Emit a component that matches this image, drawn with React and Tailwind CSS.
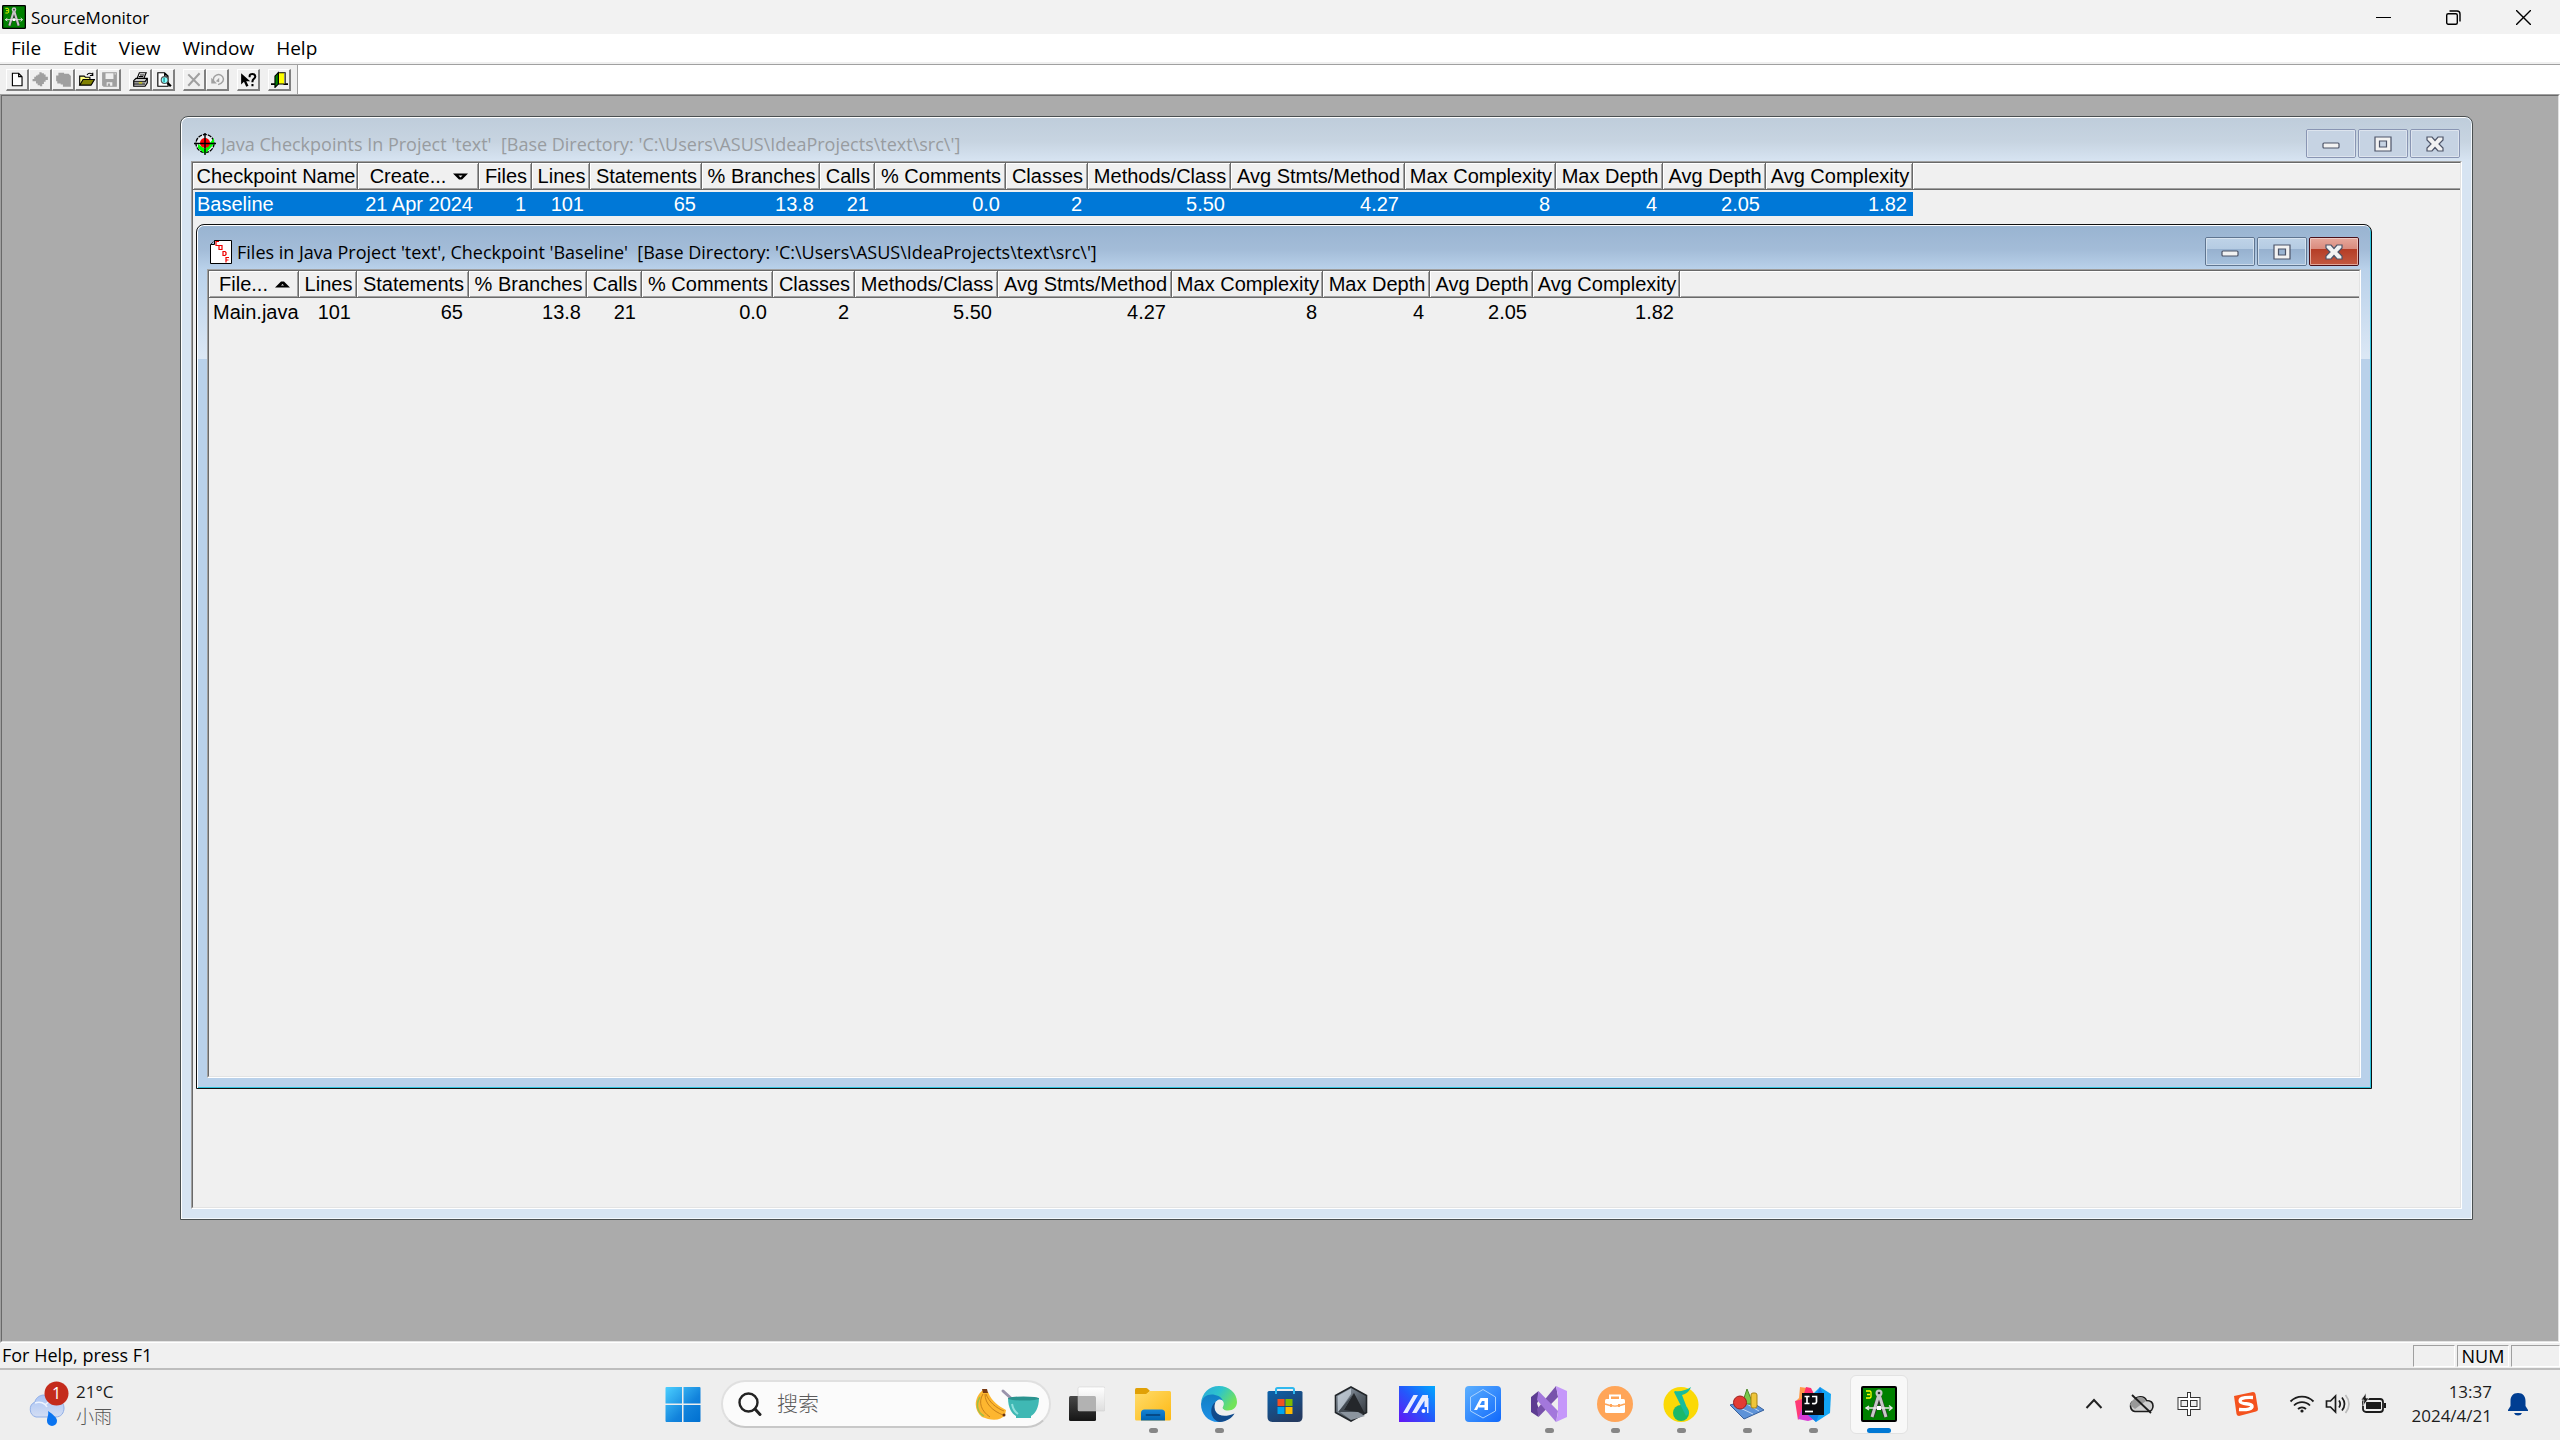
import React from "react";

const checkpointColumns = [
  ["Checkpoint Name", 165], ["Create...", 121], ["Files", 53], ["Lines", 58], ["Statements", 112],
  ["% Branches", 118], ["Calls", 55], ["% Comments", 131], ["Classes", 82], ["Methods/Class", 143],
  ["Avg Stmts/Method", 174], ["Max Complexity", 151], ["Max Depth", 107], ["Avg Depth", 103], ["Avg Complexity", 147],
];
const checkpointRow = ["Baseline", "21 Apr 2024", "1", "101", "65", "13.8", "21", "0.0", "2", "5.50", "4.27", "8", "4", "2.05", "1.82"];
const fileColumns = [["File...", 90], ...checkpointColumns.slice(3)];
const fileRow = ["Main.java", ...checkpointRow.slice(3)];

/* ---------- application icon ---------- */

function CompassIcon({ className }) {
  return (
    <svg viewBox="0 0 36 36" className={className} aria-hidden="true">
      <rect width="36" height="36" rx="2" fill="#000" />
      <rect x="2" y="2" width="32" height="32" fill="#008000" />
      <path d="M5 5h4l1 1v5l-1 1H5M6 8.500h3" stroke="#ff0" strokeWidth="1.300" fill="none" />
      <path d="M18 10 11 31M18 10l7 21" stroke="#333" strokeWidth="4.500" />
      <path d="M17.500 10 11 31M18.500 10 25 31" stroke="#c8c8c8" strokeWidth="3" />
      <path d="M5 22h25M8 20l-3 2 3 2M28 19.500l3 2.500-3 2.500" stroke="#e6e6e6" strokeWidth="1.400" fill="none" />
      <circle cx="18" cy="7" r="3.500" fill="#c8c8c8" />
      <circle cx="18" cy="7" r="1.300" fill="#333" />
      <path d="M16 20h4v4h-4z" fill="#fff" />
    </svg>
  );
}

/* ---------- toolbar ---------- */

const toolGlyphs = {
  "New project": (
    <path d="M3 2h5.500l3 3v8H3zM8.500 2v3h3" fill="#fff" stroke="#000" />
  ),
  "New checkpoint": (
    <path d="M5 3h1.500V1h2v1h2v1h1.500v2h2v3h-2v1.500h-1.500v2H9v2H7v-1H5v-1.500H3.500v-2H2V9H.500V7H2V5h1.500V4H5z" fill="#a0a0a0" />
  ),
  "Copy checkpoint": (
    <path d="M3 1.500h5v1h4l2 2V14H7v-2H5v-1H2V9H1V4h2z" fill="#a0a0a0" />
  ),
  "Open project": (
    <>
      <path d="M1.500 12.500v-8h4l1 1h4v2" fill="#ffff80" stroke="#000" />
      <path d="M1.500 12.500l3-5h10l-3 5z" fill="#808000" stroke="#000" />
      <path d="M8 3.500c1-2 4-2 5 0m0-2v2.500h-2.500" fill="none" stroke="#000" />
    </>
  ),
  "Save project": (
    <>
      <path d="M1.500 1.500h12v12h-11l-1-1z" fill="#a0a0a0" stroke="#a0a0a0" />
      <path d="M4 2h7v5H4zM5 10h5v3H8v-2H6v2H5zM12 2h1v1h-1z" fill="#f0f0f0" />
    </>
  ),
  Print: (
    <>
      <path d="M4.500 6.500l2-5h6l-2 5" fill="#fff" stroke="#000" />
      <path d="M7 3.500h4M6 5h4" stroke="#000" />
      <path d="M1.500 8.500l2-2h10v4l-2 3h-10z" fill="#c8c8c8" stroke="#000" />
      <path d="M1.500 9.500h10l2-3M1.500 11.500h10" fill="none" stroke="#000" />
      <path d="M6 10.500h3" stroke="#dd0" />
    </>
  ),
  "Print preview": (
    <>
      <path d="M2.500 1.500h6l3 3v9h-9zM8.500 1.500v3h3" fill="#fff" stroke="#000" />
      <circle cx="8.500" cy="8" r="3" fill="#8ff" stroke="#555" />
      <path d="M8 6v4" stroke="#088" />
      <path d="M11 10.500l3 3" stroke="#000" strokeWidth="2" />
    </>
  ),
  Delete: (
    <path d="M2 3l10 10M12 2 2 13" stroke="#a0a0a0" strokeWidth="1.800" fill="none" />
  ),
  Undo: (
    <>
      <path d="M4 9C3 4 9 1 12 5c2 3 0 6-4 7" stroke="#a0a0a0" strokeWidth="1.300" fill="none" />
      <path d="M2 6v5h5zM6 9l3-3v4z" fill="#a0a0a0" />
    </>
  ),
  "Context help": (
    <>
      <path d="M1 2v10l2.500-2.500L5.500 14l2-1-2-4H9z" fill="#000" />
      <path d="M8.500 5.500V4.300C8.500 2 13.500 2 13.500 4.800c0 2-2.500 2-2.500 4.200v1M11 11.500v2" stroke="#000" strokeWidth="1.800" fill="none" />
    </>
  ),
  Exit: (
    <>
      <path d="M0 11.500h4M11 11.500h4" stroke="#000" strokeWidth="1.500" />
      <path d="M6.500 1.500h6v10h-6z" fill="#ff0" stroke="#000" />
      <path d="M3.500 4.500l3-3v10l-3 3z" fill="#008000" stroke="#000" />
      <path d="M12 2v9" stroke="#888" />
    </>
  ),
};

const toolGroups = [
  ["New project", "New checkpoint", "Copy checkpoint", "Open project", "Save project"],
  ["Print", "Print preview"],
  ["Delete", "Undo"],
  ["Context help"],
  ["Exit"],
];

function Toolbar() {
  return (
    <div className="flex h-[29px] shrink-0 border-t border-[#a0a0a0] bg-white box-content">
      <div className="flex items-start gap-2 border-r border-[#a0a0a0] bg-[#f0f0f0] pt-1 pr-[6px] pl-[6px]">
        {toolGroups.map((group) => (
          <div key={group[0]} className="flex">
            {group.map((name) => (
              <button
                key={name}
                aria-label={name}
                className="flex h-[22px] w-[23px] items-center justify-center border-t border-r-2 border-b-2 border-l border-t-white border-r-[#808080] border-b-[#808080] border-l-white bg-[#f0f0f0]"
              >
                <svg viewBox="0 0 15 15" className="h-[17px] w-[17px]">{toolGlyphs[name]}</svg>
              </button>
            ))}
          </div>
        ))}
      </div>
    </div>
  );
}

/* ---------- MDI child windows ---------- */

function CheckpointIcon() {
  return (
    <svg viewBox="0 0 22 22" className="h-[22px] w-[22px] shrink-0" aria-hidden="true">
      <circle cx="11" cy="10.500" r="9" fill="#e8edf2" stroke="#000" strokeWidth="1.300" strokeDasharray="4 1" />
      <path d="M4 11l7 5 9-11v6l-9 10-7-6z" fill="#0f0" />
      <circle cx="11" cy="10" r="5" fill="#f00" />
      <path d="M11 0v22M0 10.500h22" stroke="#000" strokeWidth="1.400" />
    </svg>
  );
}

function FileIcon() {
  return (
    <svg viewBox="0 0 22 24" className="h-[24px] w-[22px] shrink-0" aria-hidden="true">
      <path d="M.500 4.500h4v-4h17v23H.500z" fill="#fff" stroke="#000" />
      <path d="M1 4 4.500.500" stroke="#000" strokeDasharray="1 1" />
      <path
        d="M9 1.500H6v4h3M9 5.500h3v4H9zM13 11.500v4h2l1-1v-2l-1-1zM19 17.500h-3v5M16 20h2.500"
        stroke="#e00" strokeWidth="1.200" fill="none"
      />
    </svg>
  );
}

const captionGlyphs = {
  Minimize: <rect x="1" y="7" width="16" height="5" rx="1" />,
  Maximize: <path fillRule="evenodd" d="M1 1h16v14H1zM5.500 5v6h7V5z" />,
  Close: <path d="M1 1h5l3 3.500L12 1h5v3l-4 4 4 4v3h-5l-3-3.500L6 15H1v-3l4-4-4-4z" />,
};

function CaptionButton({ name, active }) {
  let look = "border-[#8995b3] bg-[#c6d3e3]";
  if (active) look = "border-[#5f7590] bg-linear-to-b from-[#bfd3e8] from-0% via-[#b4cbe2] via-42% to-[#a9c2dc]";
  if (active && name === "Close") look = "border-[#4b1018] bg-linear-to-b from-[#e6a89c] from-0% via-[#d98a7c] via-42% to-[#cf6a52]";
  let lower = "";
  if (active) lower = name === "Close" ? "bg-linear-to-b from-transparent from-42% via-[#b53d26] via-42% to-[#c2573f]" : "bg-linear-to-b from-transparent from-42% via-[#97b1cf] via-42% to-[#a5c0dc]";
  return (
    <button aria-label={name} className={"h-[29px] w-[50px] rounded-xs border p-px " + look}>
      <span className={"flex h-full w-full items-center justify-center shadow-[0_0_0_1px_rgba(255,255,255,0.4)] " + lower}>
        <svg viewBox="0 0 18 16" className="h-[16px] w-[18px]" fill="#f2f2f2" stroke="#4d5468" strokeWidth="1.200">
          {captionGlyphs[name]}
        </svg>
      </span>
    </button>
  );
}

function ChildWindow({ title, icon, active, place, children }) {
  const frame = active
    ? "border-[#101010] bg-[#b9d1ea] shadow-[inset_1px_1px_0_#ffffff,inset_-1px_-1px_0_#2fc3dc]"
    : "border-[#4a4f50] bg-[#d7e4f2] shadow-[inset_1px_1px_0_#ffffff,inset_-1px_-1px_0_#f2f7fc]";
  const caption = active
    ? "bg-linear-to-b from-[#99b4d1] via-[#a3bcd8] via-55% to-[#b9d1ea]"
    : "bg-linear-to-b from-[#bfcddb] via-[#c7d4e1] via-55% to-[#d7e4f2]";
  return (
    <section aria-label={title} className={"absolute flex flex-col rounded-t-lg border p-px " + place + " " + frame}>
      <header className={"flex items-center rounded-t-md pt-[11px] pr-[11px] pb-[3px] pl-[12px] " + caption}>
        {icon}
        <h2 className={"ml-[5px] flex-1 truncate pt-px font-['Open_Sans'] text-[18px] leading-[24px] whitespace-pre " + (active ? "text-black" : "text-[#989ca0]")}>
          {title}
        </h2>
        <div className="flex gap-[2px]">
          <CaptionButton name="Minimize" active={active} />
          <CaptionButton name="Maximize" active={active} />
          <CaptionButton name="Close" active={active} />
        </div>
      </header>
      <div className={"flex min-h-0 flex-1 px-[9px] pb-[9px] " + (active ? "bg-linear-to-b from-[#b9d1ea] to-[#dce8f5] bg-[length:100%_90px] bg-no-repeat" : "")}>
        <div className="min-w-0 flex-1 border border-t-[#a0a0a0] border-r-white border-b-white border-l-[#a0a0a0]">
          <div className="h-full overflow-hidden border border-t-[#696969] border-r-[#e3e3e3] border-b-[#e3e3e3] border-l-[#696969] bg-[#f0f0f0]">
            {children}
          </div>
        </div>
      </div>
    </section>
  );
}

function SortMark({ up }) {
  return (
    <svg viewBox="0 0 15 7" className="ml-[7px] h-[7px] w-[15px] shrink-0" aria-hidden="true">
      {up ? (
        <path d="M0 6.500 6 .500h3l6 6zM6 4.500h3L7.500 3z" fill="#000" fillRule="evenodd" />
      ) : (
        <path d="M0 .500h15l-6 6H6zM5.500 2.500l2 2 2-2z" fill="#000" fillRule="evenodd" />
      )}
    </svg>
  );
}

function MetricsTable({ label, columns, row, sorted, up, selected }) {
  return (
    <table aria-label={label} className="w-full table-fixed border-separate border-spacing-0 font-['Liberation_Sans'] text-[20px] leading-[24px] whitespace-nowrap">
      <colgroup>
        {columns.map(([name, width]) => <col key={name} style={{ width }} />)}
        <col />
      </colgroup>
      <thead>
        <tr>
          {columns.map(([name], i) => (
            <th key={name} className="h-[27px] border-r border-b border-[#696969] p-0 font-normal shadow-[inset_1px_1px_0_#fff,inset_-1px_-1px_0_#a0a0a0]">
              <button className="flex w-full items-center justify-center pl-[2px]">
                {name}
                {i === sorted && <SortMark up={up} />}
              </button>
            </th>
          ))}
          <th className="border-b border-[#696969] p-0 shadow-[inset_1px_1px_0_#fff,inset_0_-1px_0_#a0a0a0]" />
        </tr>
      </thead>
      <tbody>
        <tr>
          {row.map((value, i) => (
            <td
              key={i}
              className={
                "border-t-2 border-[#f0f0f0] p-0 " +
                (i === 0 ? "border-l-2 pl-[2px] text-left " : "pr-[6px] text-right ") +
                (selected ? "bg-[#0078d7] text-white" : "text-black")
              }
            >
              {value}
            </td>
          ))}
          <td />
        </tr>
      </tbody>
    </table>
  );
}

/* ---------- taskbar ---------- */

function Glyph({ children, box = 36 }) {
  return <svg viewBox={"0 0 " + box + " " + box} className="h-[36px] w-[36px]" aria-hidden="true">{children}</svg>;
}

const taskIcons = [
  ["Task view", false, (
    <Glyph>
      <defs>
        <linearGradient id="tvDark" x2="0" y2="1"><stop stopColor="#484848" /><stop offset="1" stopColor="#151515" /></linearGradient>
        <linearGradient id="tvLight" x2="0" y2="1"><stop stopColor="#fff" /><stop offset="1" stopColor="#dedede" /></linearGradient>
      </defs>
      <rect y="10" width="27" height="25" rx="1.500" fill="url(#tvDark)" />
      <rect x="9" y="1" width="27" height="24" rx="1.500" fill="url(#tvLight)" stroke="#c8c8c8" strokeWidth=".5" />
      <path d="M9 10h16.500a1.500 1.500 0 0 1 1.500 1.500V25H9z" fill="#b2b2b2" />
    </Glyph>
  )],
  ["File Explorer", true, (
    <Glyph>
      <defs>
        <linearGradient id="fe" x2="1" y2="1"><stop stopColor="#ffdc6b" /><stop offset="1" stopColor="#fdb813" /></linearGradient>
        <linearGradient id="feB" x2="0" y2="1"><stop stopColor="#1683d4" /><stop offset="1" stopColor="#0063b1" /></linearGradient>
      </defs>
      <path d="M0 8V3.500Q0 2 1.500 2H11q1 0 2 1l2 2-3 3z" fill="#e0a006" />
      <path d="M0 8h11l4-3h19.500Q36 5 36 6.500V33q0 1.500-1.500 1.500h-33Q0 34.500 0 33z" fill="url(#fe)" />
      <path d="M6 34.500V27q0-3.500 3.500-3.500h17Q30 23.500 30 27v7.500z" fill="url(#feB)" />
      <path d="M11.500 29h13" stroke="#064a87" strokeWidth="1.800" strokeLinecap="round" />
    </Glyph>
  )],
  ["Microsoft Edge", true, (
    <Glyph>
      <defs>
        <linearGradient id="edT" x2="1" y2=".5"><stop stopColor="#2aa6dc" /><stop offset=".5" stopColor="#2dc3cd" /><stop offset="1" stopColor="#72e35a" /></linearGradient>
        <linearGradient id="edL" x2="0" y2="1"><stop stopColor="#1280c4" /><stop offset="1" stopColor="#1e90e8" /></linearGradient>
      </defs>
      <path d="M0 17C1 7 8 0 18 0c10 0 18 7 18 16 0 5-4 8.500-9 8.500-4 0-6-1.500-5.500-3 2-2 1.500-7-3-8.500C11 7 3 9 0 17z" fill="url(#edT)" />
      <path d="M0 18C1 10 8 7.500 14 9c5 1 8 4 8 7-4-3-9-1-9 4 0 8 8 13 18 9-4 5-8 7-14 7C7 36 0 28 0 18z" fill="url(#edL)" />
      <path d="M14.500 16c-4 10 4 18 19 11.500-2 4-8 8.500-15 8.500-9-2-11-15-4-20z" fill="#114a8b" />
      <path d="M17 14c-3 2-4 6-2 9-2-5 0-8 2-9z" fill="#eee" />
      <path d="M18 13.500c4-.5 5.500 3 4 6-1.500 2-.5 3.500 1.500 4.500-5 0-8.500-2-8.500-5.500 0-3 1.500-4.500 3-5z" fill="#eee" />
    </Glyph>
  )],
  ["Microsoft Store", false, (
    <Glyph>
      <defs><linearGradient id="ms" x2=".6" y2="1"><stop stopColor="#0b62ab" /><stop offset="1" stopColor="#243a61" /></linearGradient></defs>
      <path d="M9 8V3.500Q9 2 10.500 2h15Q27 2 27 3.500V8" fill="none" stroke="#2fb8ee" strokeWidth="2" />
      <path d="M.500 6.500Q.500 5 2 5h32q1.500 0 1.500 1.500V31q0 5-5 5h-25q-5 0-5-5z" fill="url(#ms)" />
      <path d="M9 8V5M27 8V5" stroke="#2fb8ee" strokeWidth="2" />
      <path d="M10.500 13h7v7h-7z" fill="#f25022" /><path d="M18.500 13h7v7h-7z" fill="#7fba00" />
      <path d="M10.500 21h7v7h-7z" fill="#00a4ef" /><path d="M18.500 21h7v7h-7z" fill="#ffb900" />
    </Glyph>
  )],
  ["Armoury Crate", false, (
    <Glyph>
      <defs><linearGradient id="ac" x2="1" y2="1"><stop stopColor="#a8b4c0" /><stop offset=".5" stopColor="#5d6670" /><stop offset="1" stopColor="#2c3034" /></linearGradient></defs>
      <path d="M18 1 33.500 9.500v17L18 35 2.500 26.500v-17z" fill="url(#ac)" stroke="#22262a" strokeWidth="1.600" />
      <path d="M18 2.500V8L5 27V10z" fill="#ccd5df" opacity=".7" />
      <path d="M21 7 32 28l-8-2-14-1z" fill="#24272b" />
      <path d="M5 26 21 7 11 24l14 2-5 2z" fill="#444b53" /><path d="m7 26 18 0 7 4-14 4z" fill="#8b949e" />
    </Glyph>
  )],
  ["MyASUS", false, (
    <Glyph>
      <defs><linearGradient id="ma" x1="0" y1="1" x2="1" y2="0"><stop stopColor="#6414f5" /><stop offset=".5" stopColor="#2458fb" /><stop offset="1" stopColor="#00a8ff" /></linearGradient></defs>
      <path d="M0 0h36v36H0z" fill="url(#ma)" />
      <path d="M4 27 14.500 9H19L8.500 27zM13 27 23.500 9H29v12h-3.500v-6.500L17.500 27z" fill="#e8edff" /><circle cx="24.500" cy="25" r="2" fill="#fff" />
      <path d="M28 12h1.500v15H28z" fill="#e8edff" />
    </Glyph>
  )],
  ["ASUS App", false, (
    <Glyph>
      <defs><linearGradient id="aa" x2="1" y2="1"><stop stopColor="#5cb0ff" /><stop offset="1" stopColor="#1068fb" /></linearGradient></defs>
      <rect width="36" height="36" rx="4" fill="url(#aa)" />
      <path d="M18 3.500 30.500 11v14L18 32 5.500 25V11z" fill="none" stroke="#a8d2ff" strokeWidth="1" />
      <path d="M9 24 15.500 12H23v12h-3.500V15H17l-5 9zM14 19h6v2.500h-6z" fill="#fff" />
    </Glyph>
  )],
  ["Visual Studio", true, (
    <Glyph>
      <path d="M0 11 7.500 5v9L6 17.500 7.500 22v9L0 26z" fill="#5d3c92" />
      <path d="M6 23 25 0l2 11L7.500 31z" fill="#7852ab" />
      <path d="M25 0 36 5v26L25 36 27 27V10z" fill="#c597fa" />
      <path d="M7.500 5 27 25l-2 11L6 14z" fill="#a377dc" />
    </Glyph>
  )],
  ["Briefcase", true, (
    <Glyph>
      <circle cx="18" cy="18" r="18" fill="#ffa558" />
      <rect x="8" y="13" width="20" height="14" rx="1.500" fill="#fff" />
      <path d="M13 13v-3.500h10V13" fill="none" stroke="#fff" strokeWidth="2" />
      <path d="M8 18c6 2.500 14 2.500 20 0" fill="none" stroke="#ffa558" strokeWidth="1.400" />
      <path d="M13 18h2v3h-2zM21 18h2v3h-2z" fill="#ffa558" />
    </Glyph>
  )],
  ["QQ Music", true, (
    <Glyph>
      <circle cx="18" cy="18.500" r="17.500" fill="#fbd906" />
      <circle cx="18" cy="27" r="8" fill="#1bb86a" />
      <path d="M12 5c5 1 12-1 16-4-2 5-5 7-9 8l7 18-3 3-12-24z" fill="#18bd9b" />
    </Glyph>
  )],
  ["Shapes", true, (
    <Glyph>
      <path d="M1 19 20 14l15 10-20 9z" fill="#5e93d8" stroke="#36609c" /><path d="m7 20 17 8M16 17l14 8" stroke="#bfd7f5" />
      <path d="m18 3 6 15-11 0z" fill="#7ac74a" stroke="#4a8a26" />
      <rect x="22" y="7" width="6" height="15" rx="2" fill="#f0c63a" stroke="#a88214" />
      <circle cx="11" cy="16.500" r="6.500" fill="#e23b34" stroke="#9d1d1a" />
    </Glyph>
  )],
  ["IntelliJ IDEA", true, (
    <Glyph>
      <path d="m5 1 7 1 8 7-8 13-12-6 4-4z" fill="#ff9a4a" /><path d="m11 1 5 1 4 8-15 10z" fill="#ff2f6f" />
      <path d="m0 15 8-2v15l-5 6z" fill="#ff3a78" /><path d="m3 33 5-13 12 13-7 2z" fill="#d93bd6" />
      <path d="m18 8 7-7 11 7-1 19-14 9-8-8z" fill="#12a5f4" /><path d="m25 1 5 12-9 23-8-7z" fill="#1681e8" />
      <path d="M7 7h22v22H7z" fill="#0b0b0f" />
      <path d="M9.500 10.500h5M12 10.500v7M9.500 17.500h5M17 10.500h4.500V16q0 2-4.500 1.500" fill="none" stroke="#fff" strokeWidth="1.700" />
      <path d="M10 25.500h8" stroke="#fff" strokeWidth="1.700" />
    </Glyph>
  )],
];

function TaskButton({ name, running, active, children }) {
  return (
    <button aria-label={name} className="flex w-[66px] justify-center">
      <span className={"flex h-[59px] w-[58px] flex-col items-center rounded-md border pt-[10px] " + (active ? "border-[#e2e2e2] bg-[#f8f8f8]" : "border-transparent")}>
        {children}
        {running && <span className={"mt-[6px] h-[5px] rounded-full " + (active ? "w-[24px] bg-[#0078d4]" : "w-[9px] bg-[#868686]")} />}
      </span>
    </button>
  );
}

function FruitBowl() {
  return (
    <svg viewBox="0 0 64 32" className="h-[32px] w-[64px] shrink-0" aria-hidden="true">
      <path d="M8 2c-9 7-10 20-1 27l6 2c8 2 14 0 17-4l1-5C24 18 17 14 13 4z" fill="#fdb62f" />
      <path d="M8 6c-5 8-2 17 7 23M10 6c0 10 8 17 18 21M11 6c3 8 10 14 18 17" stroke="#c9821a" strokeWidth="1" fill="none" />
      <path d="M5 9C0 17 3 25 9 28" stroke="#9cc04a" strokeWidth="1.500" fill="none" />
      <path d="M7 1h5l1 4H8z" fill="#7a3b12" /><circle cx="29" cy="27" r="1.500" fill="#6a3410" />
      <path d="m28 3 11 10" stroke="#9a94ac" strokeWidth="3" strokeLinecap="round" />
      <path d="M33 10h31c0 10-4 16-8 18v2H41v-2c-4-2-8-8-8-18z" fill="#3fb8b4" />
      <ellipse cx="48.500" cy="10.500" rx="15.500" ry="2" fill="#2a938f" />
      <path d="M37 16c1 5 3 8 6 10" stroke="#8fe0dc" strokeWidth="2" fill="none" />
    </svg>
  );
}

function Taskbar() {
  return (
    <footer className="grid h-[72px] shrink-0 grid-cols-[1fr_auto_1fr] items-center border-t-2 border-[#bdbdbd] bg-[#eeeeee] pb-[2px] pl-[2px] font-['Open_Sans','Noto_Sans_CJK_SC',sans-serif] text-[17px] text-[#1c1c1c]">
      <button className="flex items-center justify-self-start pl-[26px] text-left">
        <svg viewBox="0 0 42 46" className="h-[46px] w-[42px]" aria-hidden="true">
          <defs><linearGradient id="cl" x2="0" y2="1"><stop stopColor="#a9c4f5" /><stop offset="1" stopColor="#d3ddf3" /></linearGradient></defs>
          <path d="M8 36a8 8 0 0 1-1-15c1-7 12-10 16-3 7-2 13 3 13 9 0 5-3 9-8 9z" fill="url(#cl)" stroke="#90aee6" />
          <path d="M7 22c5-2 10 0 12 4M17 24c3-4 10-6 15-3" stroke="#eef4ff" strokeWidth="1.500" fill="none" />
          <path d="M20 30c6 4 9 7 9 10a5 5 0 0 1-10 0c0-4 2-6 1-10z" fill="#0a74f0" />
          <circle cx="28.500" cy="12.500" r="12" fill="#c42b1c" />
          <text x="28.500" y="18" textAnchor="middle" fontSize="16" fill="#fff">1</text>
        </svg>
        <span className="flex flex-col pl-[6px] leading-[24px]">
          <span>21°C</span>
          <span className="text-[18px] font-light text-[#555]">小雨</span>
        </span>
      </button>
      <nav aria-label="Taskbar" className="flex items-center">
        <button aria-label="Start" className="flex w-[66px] justify-center">
          <Glyph>
            <defs><linearGradient id="win" x2="1" y2="1"><stop stopColor="#4bcfff" /><stop offset=".6" stopColor="#1283dc" /><stop offset="1" stopColor="#0070d0" /></linearGradient></defs>
            <path d="M1.500 1H17v16.500H.500V2q0-1 1-1zM18.500 1h16q1 0 1 1v15.500h-17zM.500 19H17v17H1.500q-1 0-1-1zM18.500 19h17v16q0 1-1 1h-16z" fill="url(#win)" />
          </Glyph>
        </button>
        <label className="mr-[3px] ml-[5px] flex h-[48px] w-[330px] items-center rounded-full border-2 border-[#e0e0e0] border-b-[#c8c8c8] bg-[#fbfbfb] pr-[10px] pl-[15px]">
          <svg viewBox="0 0 24 24" className="h-[24px] w-[24px] shrink-0" fill="none" stroke="#222" strokeWidth="2.400" strokeLinecap="round">
            <circle cx="10.500" cy="10.500" r="9" /><path d="m17 17 5 5.500" strokeWidth="3" />
          </svg>
          <input aria-label="搜索" placeholder="搜索" className="ml-[15px] w-0 flex-1 bg-transparent text-[21px] font-light outline-none placeholder:text-[#5a5a5a]" />
          <FruitBowl />
        </label>
        {taskIcons.map(([name, running, icon]) => (
          <TaskButton key={name} name={name} running={running}>{icon}</TaskButton>
        ))}
        <TaskButton name="SourceMonitor" running active><CompassIcon className="h-[36px] w-[36px]" /></TaskButton>
      </nav>
      <div className="flex items-center justify-self-end pr-[31px]">
        <button aria-label="Show hidden icons">
          <svg viewBox="0 0 18 12" className="h-[12px] w-[18px]" fill="none" stroke="#222" strokeWidth="2"><path d="m1.500 10 7.500-8 7.500 8" /></svg>
        </button>
        <button aria-label="OneDrive" className="ml-[25px]">
          <svg viewBox="0 0 26 20" className="h-[20px] w-[26px]">
            <path d="M7 17.500a5.500 5.500 0 0 1-1-10.500C8 2 16 1 18.500 6.500 23 6.500 25 9 25 12s-2 5.500-5 5.500z" fill="#cfcfcf" stroke="#1c1c1c" strokeWidth="1.600" />
            <path d="M2 11C5 3 15 0 18 7l-7 5-4 3z" fill="#999" />
            <path d="m4 1 19 18" stroke="#1c1c1c" strokeWidth="1.800" />
          </svg>
        </button>
        <button aria-label="Input language: Chinese" className="ml-[23px]">
          <svg viewBox="0 0 24 24" className="h-[24px] w-[24px]" fill="none">
            <path d="M2.500 7h19v9h-19zM12 0v24" stroke="#333" strokeWidth="4" />
            <path d="M2.500 7h19v9h-19zM12 1v22" stroke="#fff" strokeWidth="2" />
          </svg>
        </button>
        <button aria-label="Sogou input" className="ml-[33px]">
          <svg viewBox="0 0 24 24" className="h-[24px] w-[24px]">
            <path d="m0 4 19-4q2 0 2.500 2L24 17q0 2-2 2.500L5 24q-2 0-2.500-2z" fill="#f4521e" />
            <path d="M19 5.500C8 5 5 7 6.500 10c1.500 2.500 11 1 11.500 4 .5 3-5 4-13 3.500" fill="none" stroke="#fff" strokeWidth="3.400" />
          </svg>
        </button>
        <button aria-label="Network, sound and battery" className="ml-[31px] flex items-center gap-[10px]">
          <svg viewBox="0 0 26 20" className="h-[20px] w-[26px]" fill="none" stroke="#1c1c1c" strokeWidth="1.800">
            <path d="M1.500 7.500a16 16 0 0 1 23 0M5 11.500a11 11 0 0 1 16 0M9 15a6 6 0 0 1 8 0" /><circle cx="13" cy="17" r="1.600" fill="#1c1c1c" stroke="none" />
          </svg>
          <svg viewBox="0 0 26 22" className="h-[22px] w-[26px]" fill="none" stroke="#1c1c1c" strokeWidth="1.700">
            <path d="M1.500 8v6h4l5 5V3l-5 5zM14 7.500q2.500 3.500 0 7M17 4.500q5 6.500 0 13" /><path d="M20.500 2q7 9 0 18" stroke="#bbb" />
          </svg>
          <svg viewBox="0 0 26 22" className="h-[22px] w-[26px]">
            <rect x="2" y="6" width="20" height="13" rx="3" fill="none" stroke="#1c1c1c" strokeWidth="1.800" />
            <path d="M5 9h15v7H5z" fill="#1c1c1c" /><path d="M23 10h2v5h-2z" fill="#1c1c1c" />
            <path d="M5 0 0 7h3l-1 6 6-8H5z" fill="#1c1c1c" stroke="#eee" strokeWidth=".7" />
          </svg>
        </button>
        <button className="ml-[24px] flex flex-col text-right leading-[24px]">
          <span>13:37</span>
          <span>2024/4/21</span>
        </button>
        <button aria-label="Notifications" className="ml-[15px]">
          <svg viewBox="0 0 22 24" className="h-[24px] w-[22px]" fill="#003e92">
            <path d="M11 1c-5 0-7.500 3.500-7.500 8v5L1 18v1h20v-1l-2.500-4V9c0-4.500-2.500-8-7.500-8zM7 21h8q-1 2.500-4 2.500T7 21z" />
          </svg>
        </button>
      </div>
    </footer>
  );
}

/* ---------- application shell ---------- */

export default function App() {
  return (
    <div className="flex h-screen flex-col overflow-hidden bg-[#f0f0f0] font-['Open_Sans','Noto_Sans_CJK_SC',sans-serif] text-black">
      <header className="flex h-[34px] shrink-0 items-center bg-[#f2f2f2] pr-[2px]">
        <CompassIcon className="ml-[2px] h-[24px] w-[24px]" />
        <h1 className="ml-[5px] flex-1 pt-[2px] text-[17px] leading-[24px]">SourceMonitor</h1>
        <button aria-label="Minimize" className="flex h-full w-[70px] items-center justify-center">
          <svg viewBox="0 0 15 15" className="h-[15px] w-[15px]"><path d="M0 7.500h15" stroke="#000" /></svg>
        </button>
        <button aria-label="Restore" className="flex h-full w-[70px] items-center justify-center">
          <svg viewBox="0 0 15 15" className="h-[15px] w-[15px]" fill="none" stroke="#000" strokeWidth="1.400">
            <rect x=".7" y="3.700" width="10.600" height="10.600" rx="1.500" /><path d="M3.500 1H11q3 0 3 3v7.500" />
          </svg>
        </button>
        <button aria-label="Close" className="flex h-full w-[70px] items-center justify-center">
          <svg viewBox="0 0 15 15" className="h-[15px] w-[15px]"><path d="m0 0 15 15M15 0 0 15" stroke="#000" strokeWidth="1.400" /></svg>
        </button>
      </header>
      <nav aria-label="Menu" className="flex h-[30px] shrink-0 border-b-2 border-[#f0f0f0] bg-white text-[19px] leading-[28px]">
        {["File", "Edit", "View", "Window", "Help"].map((item) => (
          <button key={item} className="px-[11px]">{item}</button>
        ))}
      </nav>
      <Toolbar />
      <main className="flex min-h-0 flex-1 border border-t-[#a0a0a0] border-r-white border-b-white border-l-[#a0a0a0]">
        <div className="relative flex-1 border border-t-[#696969] border-r-[#e3e3e3] border-b-[#e3e3e3] border-l-[#696969] bg-[#ababab]">
          <ChildWindow
            title="Java Checkpoints In Project 'text'  [Base Directory: 'C:\Users\ASUS\IdeaProjects\text\src\']"
            icon={<CheckpointIcon />}
            place="top-[20px] right-[85px] bottom-[121px] left-[178px]"
          >
            <MetricsTable label="Checkpoints" columns={checkpointColumns} row={checkpointRow} sorted={1} selected />
          </ChildWindow>
          <ChildWindow
            active
            title="Files in Java Project 'text', Checkpoint 'Baseline'  [Base Directory: 'C:\Users\ASUS\IdeaProjects\text\src\']"
            icon={<FileIcon />}
            place="top-[128px] right-[186px] bottom-[252px] left-[194px]"
          >
            <MetricsTable label="Files" columns={fileColumns} row={fileRow} sorted={0} up />
          </ChildWindow>
        </div>
      </main>
      <div role="status" className="flex h-[25px] shrink-0 text-[18px] leading-[24px]">
        <span className="flex-1 pl-[2px]">For Help, press F1</span>
        <div className="flex gap-[2px] pt-[2px] pb-px leading-[20px]">
          <span className="w-[42px] border border-t-[#a0a0a0] border-r-white border-b-white border-l-[#a0a0a0]" />
          <span className="w-[52px] border border-t-[#a0a0a0] border-r-white border-b-white border-l-[#a0a0a0] text-center">NUM</span>
          <span className="w-[49px] border border-t-[#a0a0a0] border-r-white border-b-white border-l-[#a0a0a0]" />
        </div>
      </div>
      <Taskbar />
    </div>
  );
}
